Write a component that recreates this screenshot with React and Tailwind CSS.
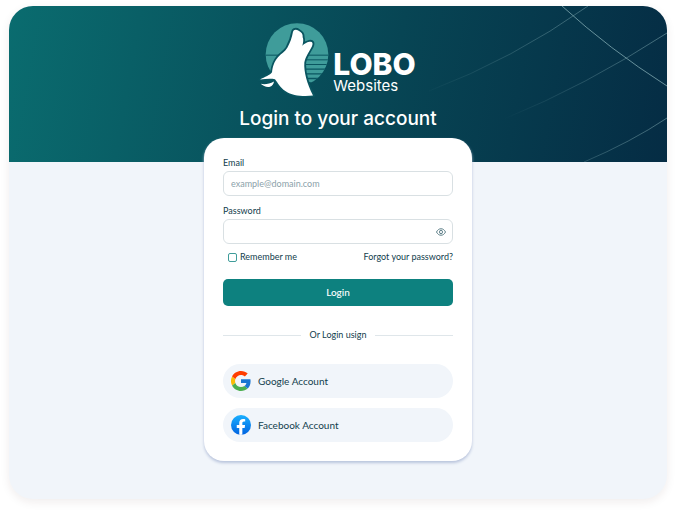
import React, { useState } from 'react';

const WolfLogo = () => (
  <svg viewBox="24 22 216 224" className="h-[75px] w-[72px] shrink-0" aria-hidden="true">
    <defs>
      <clipPath id="moon">
        <circle cx="141" cy="119" r="94" />
      </clipPath>
    </defs>
    <circle cx="141" cy="119" r="94" fill="#3f9c9a" />
    <g clipPath="url(#moon)" stroke="#0a5560">
      <path d="M40 121H240" strokeWidth="3" />
      <path d="M150 135H240M150 149H240" strokeWidth="3" />
      <path d="M150 163H240M150 177H240" strokeWidth="4" />
      <path d="M150 191H240M150 204H240" strokeWidth="5" />
    </g>
    <path
      d="M30 194C44 186 61 180 66 172C68 155 72 141 84 127C93 117 105 111 112 99C120 84 126 69 129 51C131 43 139 43 146 48C154 52 159 58 158 67C161 74 160 82 157 93C163 86 170 83 178 81C187 79 190 84 186 94C178 110 166 125 163 143C161 170 171 206 189 242C160 245 127 243 107 229C88 216 84 204 75 193C62 191 47 192 30 194Z"
      fill="#fff"
      stroke="#0a5560"
      strokeWidth="11"
      strokeLinejoin="round"
      paintOrder="stroke"
    />
    <path d="M32 207C46 210 58 207 72 200C71 207 67 214 60 216C49 218 40 214 32 207Z" fill="#fff" />
  </svg>
);

const HeaderLines = () => (
  <svg viewBox="0 0 258 156" className="absolute right-0 top-0 h-[156px] w-[258px]" fill="none" aria-hidden="true">
    <defs>
      <linearGradient id="fade" gradientUnits="userSpaceOnUse" x1="10" y1="0" x2="220" y2="0">
        <stop offset="0" stopColor="#7fa9b0" stopOpacity="0" />
        <stop offset="1" stopColor="#7fa9b0" stopOpacity="0.6" />
      </linearGradient>
      <linearGradient id="fadeLow" gradientUnits="userSpaceOnUse" x1="95" y1="0" x2="258" y2="0">
        <stop offset="0" stopColor="#7fa9b0" stopOpacity="0" />
        <stop offset="1" stopColor="#7fa9b0" stopOpacity="0.55" />
      </linearGradient>
    </defs>
    <path d="M153 0Q200 43 258 80" stroke="#7fa9b0" strokeOpacity="0.8" />
    <path d="M20 85Q104 53 179 0" stroke="url(#fade)" />
    <path d="M95 113Q176 80 258 27" stroke="url(#fadeLow)" />
    <path d="M175 156Q222 136 258 112" stroke="url(#fadeLow)" />
  </svg>
);

const EyeIcon = () => (
  <svg viewBox="0 0 20 16" className="h-2 w-[10px]" fill="none" stroke="#4d727c" strokeWidth="1.8" aria-hidden="true">
    <path d="M1 8C3 4 6 1.500 10 1.500S17 4 19 8C17 12 14 14.500 10 14.500S3 12 1 8Z" />
    <ellipse cx="10" cy="8" rx="3" ry="3.500" />
  </svg>
);

const GoogleIcon = () => (
  <svg viewBox="0 0 48 48" className="size-5 shrink-0" aria-hidden="true">
    <path fill="#fbbc05" d="M10.500 28.600A14.500 14.500 0 0 1 10.500 19.400L2.600 13.200A24 24 0 0 0 2.600 34.800Z" />
    <path fill="#ff3d00" d="M24 9.500c3.500 0 6.700 1.200 9.200 3.600l6.900-6.900C35.900 2.400 30.500 0 24 0 14.600 0 6.500 5.400 2.600 13.200l7.900 6.200C12.400 13.700 17.700 9.500 24 9.500Z" />
    <path fill="#4caf50" d="M24 48c6.500 0 11.900-2.100 15.900-5.800l-7.700-6c-2.200 1.500-4.900 2.300-8.200 2.300-6.300 0-11.600-4.200-13.500-9.900l-7.900 6.200C6.500 42.600 14.600 48 24 48Z" />
    <path fill="#1976d2" d="M47 24.500c0-1.600-.2-3.100-.4-4.500H24v9h12.900c-.6 3-2.200 5.500-4.700 7.200l7.700 6C44.400 38 47 31.800 47 24.500Z" />
  </svg>
);

const FacebookIcon = () => (
  <svg viewBox="0 0 40 40" className="size-5 shrink-0" aria-hidden="true">
    <defs>
      <linearGradient id="fb" x1="0" y1="0" x2="0" y2="1">
        <stop offset="0" stopColor="#19afff" />
        <stop offset="1" stopColor="#0062e0" />
      </linearGradient>
    </defs>
    <circle cx="20" cy="20" r="20" fill="url(#fb)" />
    <path
      fill="#fff"
      d="M16.500 39.700V25.800h-5V20h5v-4.400c0-5 3-7.700 7.500-7.700 2.100 0 4.400.4 4.400.4v4.900h-2.500c-2.400 0-3.200 1.500-3.200 3.100V20h5.500l-.9 5.800h-4.600v13.900c-2 .4-4.200.4-6.200 0Z"
    />
  </svg>
);

const providers = [
  { name: 'Google Account', icon: <GoogleIcon /> },
  { name: 'Facebook Account', icon: <FacebookIcon /> }
];

const App = () => {
  const [showPassword, setShowPassword] = useState(false);

  return (
    <div className="bg-white px-[9px] pt-[6px] pb-3 font-['Inter',sans-serif] text-[#12404d]">
      <div className="overflow-hidden rounded-3xl bg-[#f1f5fa] pb-[38px] shadow-[0_3px_10px_rgba(60,30,20,0.08)]">
        <header className="relative flex h-[156px] flex-col items-center bg-linear-[100deg,#0a6c6f,#074554_58%,#052c44] pt-4 text-white">
          <HeaderLines />
          <div className="relative flex items-center gap-[3px] pr-[2px]">
            <WolfLogo />
            <div className="pt-6">
              <p className="text-[30px] leading-7 font-extrabold">LOBO</p>
              <p className="text-[15px] leading-4">Websites</p>
            </div>
          </div>
          <h1 className="relative mt-[10px] text-[19px] leading-6 font-medium">Login to your account</h1>
        </header>

        <main className="relative mx-auto -mt-6 w-[268px] rounded-[20px] bg-white px-[19px] pt-5 pb-[19px] font-['Lato',sans-serif] shadow-[0_2px_3px_#b9c4dc]">
          <form onSubmit={(e) => e.preventDefault()}>
            <label htmlFor="email" className="block text-[9px] leading-[10px]">Email</label>
            <input
              id="email"
              type="email"
              placeholder="example@domain.com"
              className="mt-[3px] block h-[25px] w-full rounded-md border border-[#d9e0e3] px-[7px] text-[9px] outline-none placeholder:text-[#8ba1a9]"
            />

            <label htmlFor="password" className="mt-[10px] block text-[9px] leading-[10px]">Password</label>
            <div className="mt-[3px] flex h-[25px] items-center rounded-md border border-[#d9e0e3] pr-[6px]">
              <input
                id="password"
                type={showPassword ? 'text' : 'password'}
                className="h-full min-w-0 flex-1 px-[7px] text-[9px] outline-none"
              />
              <button type="button" aria-label="Show password" onClick={() => setShowPassword(!showPassword)}>
                <EyeIcon />
              </button>
            </div>

            <div className="mt-2 flex items-center justify-between pl-[5px] text-[9px] leading-[10px]">
              <label className="flex items-center gap-[3px]">
                <input
                  type="checkbox"
                  className="size-[9px] appearance-none rounded-[2px] border border-[#3f9c9a] checked:bg-[#0d817f]"
                />
                Remember me
              </label>
              <a href="#forgot">Forgot your password?</a>
            </div>

            <button type="submit" className="mt-[17px] block h-[27px] w-full rounded-[5px] bg-[#0d817f] text-[10px] font-medium text-white">
              Login
            </button>
          </form>

          <div className="mt-6 flex items-center gap-[9px] text-[9px] leading-[10px]">
            <span className="h-px flex-1 bg-[#dfe6ea]" />
            <span>Or Login usign</span>
            <span className="h-px flex-1 bg-[#dfe6ea]" />
          </div>

          <div className="mt-6 flex flex-col gap-[10px]">
            {providers.map((provider) => (
              <button
                key={provider.name}
                type="button"
                className="flex h-[34px] w-full items-center gap-[7px] rounded-full bg-[#f1f5fa] px-2 text-[10px]"
              >
                {provider.icon}
                <span>{provider.name}</span>
              </button>
            ))}
          </div>
        </main>
      </div>
    </div>
  );
};

export default App;
